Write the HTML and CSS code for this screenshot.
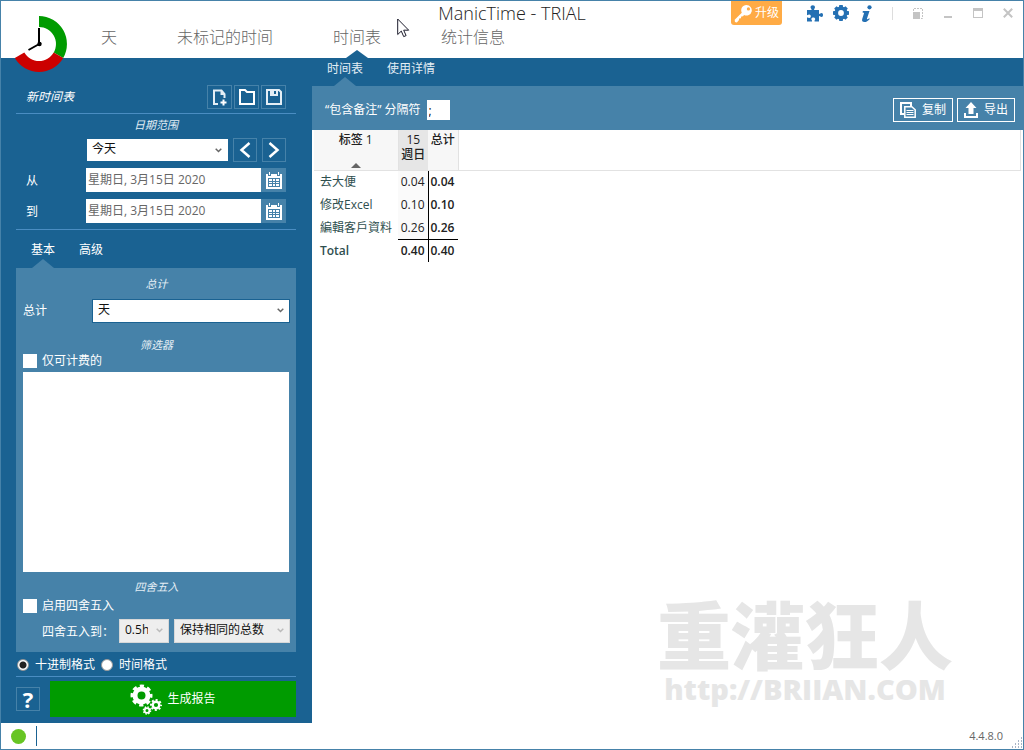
FILE: index.html
```html
<!DOCTYPE html>
<html lang="zh-CN">
<head>
<meta charset="utf-8">
<title>ManicTime - TRIAL</title>
<link rel="stylesheet" href="styles.css">
</head>
<body>
<div class="window">
  <header class="header">
    <div class="titlebar">
      <h1 class="app-title">ManicTime - TRIAL</h1>
      <div class="title-tools">
        <button class="upgrade" type="button">
          <svg width="19" height="19" viewBox="0 0 20 20" aria-hidden="true"><path fill="#fff" fill-rule="evenodd" d="M13 1a5.600 5.600 0 1 1-2.400 10.600L9.500 12.800l-1.900.3-.3 1.900-1.900.3-.3 1.800L3 19.500 1 19l-.3-2.500L8.200 9.200A5.600 5.600 0 0 1 13 1Zm2.200 2.500a1.700 1.700 0 1 0 0 3.400 1.700 1.700 0 0 0 0-3.400Z"/></svg>
          <span>升级</span>
        </button>
        <button class="tool" type="button" aria-label="插件"><svg width="17" height="17" viewBox="0 0 17 17"><path fill="#2470b3" d="M1 5h4.500C6 4 4.500 3.500 4.500 2.200 4.500 1 5.500.2 6.800.2S9 1 9 2.200C9 3.500 7.700 4 8.200 5H13v3.800c1 .4 1.300-.8 2.500-.8 1 0 1.500.9 1.500 2s-.5 2-1.500 2c-1.200 0-1.500-1.200-2.500-.8V16.500H8.600c-.5-1 .6-1.400.6-2.500 0-.9-.8-1.500-1.900-1.500s-2 .6-2 1.500c0 1.100 1.200 1.500.7 2.500H1v-4c1-.4 1.400.5 2.400.5.9 0 1.400-.8 1.400-1.700s-.6-1.700-1.400-1.700c-1 0-1.400.9-2.400.5Z"/></svg></button>
        <button class="tool" type="button" aria-label="设置"><svg width="16" height="16" viewBox="0 0 16 16"><g fill="#2470b3"><path fill-rule="evenodd" d="M8 1.500a6.500 6.500 0 1 1 0 13 6.500 6.500 0 0 1 0-13Zm0 3.600a2.900 2.900 0 1 0 0 5.800 2.900 2.900 0 0 0 0-5.800Z"/><path d="M6.300 0h3.400l.6 3H5.700ZM6.300 16h3.400l.6-3H5.700ZM0 6.300v3.400l3 .6V5.700ZM16 6.300v3.400l-3 .6V5.700ZM1.200 3.500l2.300-2.300L6 3 3 6ZM14.800 3.500l-2.300-2.300L10 3l3 3ZM1.200 12.500l2.300 2.300L6 13l-3-3ZM14.800 12.500l-2.300 2.300L10 13l3-3Z"/></g></svg></button>
        <button class="tool" type="button" aria-label="关于"><svg width="12" height="17" viewBox="0 0 12 17"><circle cx="8.500" cy="2.300" r="2.100" fill="#2470b3"/><path fill="#2470b3" d="M2 6h6.500L6 13.500c-.3 1 .3 1.200 2.200-.3l.6.700C7 16 5.400 17 3.500 17 1.300 17 .7 15.700 1.200 14l1.900-6-1.700-.7Z"/></svg></button>
        <span class="divider"></span>
        <button class="win first" type="button" aria-label="迷你模式"><svg width="10" height="11" viewBox="0 0 10 11"><path fill="none" stroke="#c4c4c4" stroke-dasharray="2 1" d="M.5 3V.5h9v10H7"/><path fill="#c4c4c4" d="M0 4h7v7H0Z"/></svg></button>
        <button class="win" type="button" aria-label="最小化"><svg width="10" height="11" viewBox="0 0 10 11"><path fill="#c4c4c4" d="M1 8h8v2H1Z"/></svg></button>
        <button class="win" type="button" aria-label="最大化"><svg width="10" height="11" viewBox="0 0 10 11"><path fill="#c4c4c4" fill-rule="evenodd" d="M0 0h10v10H0ZM1 3v6h8V3Z"/></svg></button>
        <button class="win" type="button" aria-label="关闭"><svg width="10" height="11" viewBox="0 0 10 11"><path fill="none" stroke="#c4c4c4" stroke-width="2" d="M.8.800l8.400 8.400M9.200.800L.8 9.200"/></svg></button>
      </div>
    </div>
    <nav class="nav">
      <a class="nav-link" href="#">天</a>
      <a class="nav-link" href="#">未标记的时间</a>
      <a class="nav-link current" href="#">时间表</a>
      <a class="nav-link" href="#">统计信息</a>
    </nav>
    <svg class="logo" width="54" height="56" viewBox="0 0 54 56" aria-hidden="true">
      <circle cx="25" cy="28" r="22" fill="#fff"/>
      <path fill="#009b00" d="M25 0a28 28 0 0 1 24.200 42L39.700 36.500A17 17 0 0 0 25 11Z"/>
      <path fill="#c00" d="M49.200 42A28 28 0 0 1 .8 42L10.300 36.500a17 17 0 0 0 29.400 0Z"/>
      <path fill="none" stroke="#000" stroke-width="2" d="M25 12v18M14.500 34L27 27"/>
      <circle cx="25.500" cy="28" r="2.200"/>
    </svg>
    <svg class="pointer" width="13" height="20" viewBox="0 0 13 20" aria-hidden="true"><path fill="#fff" stroke="#1c1c2c" d="M.7 1v15.500l3.600-3.400 2.400 5.500 2.400-1-2.400-5.400h5Z"/></svg>
  </header>

  <div class="body">
    <aside class="sidebar">
      <div class="sheet-row">
        <em class="sheet-name">新时间表</em>
        <button class="square wide" type="button" aria-label="新建"><svg width="16" height="17" viewBox="0 0 16 17"><path fill="none" stroke="#e4eef5" stroke-width="2" d="M6 15H2V1.500h7.500l3 3.500v4"/><path fill="#e4eef5" d="M8.500 1v5H13Z"/><path fill="none" stroke="#fff" stroke-width="2" d="M11.500 10.500v6M8.500 13.500h6"/></svg></button>
        <button class="square wide" type="button" aria-label="打开"><svg width="16" height="16" viewBox="0 0 16 16"><path fill="none" stroke="#fff" stroke-width="2" d="M1 1h5l2 2h7v12H1Z"/></svg></button>
        <button class="square wide" type="button" aria-label="保存"><svg width="16" height="16" viewBox="0 0 16 16"><path fill="none" stroke="#e4eef5" stroke-width="2" d="M1 1h12l2 2v12H1Z"/><path fill="#e4eef5" fill-rule="evenodd" d="M4 1h8v6H4ZM8 2v3h2V2Z"/></svg></button>
      </div>

      <h2 class="section-title">日期范围</h2>
      <div class="range-row">
        <span class="select range-select">
          <select aria-label="日期范围"><option>今天</option></select>
          <svg class="chevron" width="7" height="5" viewBox="0 0 7 5"><path d="M.7.7l2.800 2.800L6.300.7"/></svg>
        </span>
        <button class="square" type="button" aria-label="上一个"><svg width="12" height="16" viewBox="0 0 12 16"><path fill="none" stroke="#fff" stroke-width="2.500" d="M10.500 1L2.500 8l8 7"/></svg></button>
        <button class="square" type="button" aria-label="下一个"><svg width="12" height="16" viewBox="0 0 12 16"><path fill="none" stroke="#fff" stroke-width="2.500" d="M1.500 1l8 7-8 7"/></svg></button>
      </div>
      <div class="date-row">
        <label for="from">从</label>
        <input id="from" type="text" value="星期日, 3月15日 2020">
        <button class="calendar" type="button" aria-label="选择开始日期"><svg width="16" height="17" viewBox="0 0 16 17"><path fill="#fff" fill-rule="evenodd" d="M0 2h2v2h3V2h6v2h3V2h2v15H0ZM2 6v9h12V6Z"/><path fill="#fff" d="M3 0h1v3H3ZM12 0h1v3h-1ZM3 7h3v2H3ZM7 7h2v2H7ZM10 7h3v2h-3ZM3 10h3v1H3ZM7 10h2v1H7ZM10 10h3v1h-3ZM3 12h3v2H3ZM7 12h2v2H7ZM10 12h3v2h-3Z"/></svg></button>
      </div>
      <div class="date-row">
        <label for="to">到</label>
        <input id="to" type="text" value="星期日, 3月15日 2020">
        <button class="calendar" type="button" aria-label="选择结束日期"><svg width="16" height="17" viewBox="0 0 16 17"><path fill="#fff" fill-rule="evenodd" d="M0 2h2v2h3V2h6v2h3V2h2v15H0ZM2 6v9h12V6Z"/><path fill="#fff" d="M3 0h1v3H3ZM12 0h1v3h-1ZM3 7h3v2H3ZM7 7h2v2H7ZM10 7h3v2h-3ZM3 10h3v1H3ZM7 10h2v1H7ZM10 10h3v1h-3ZM3 12h3v2H3ZM7 12h2v2H7ZM10 12h3v2h-3Z"/></svg></button>
      </div>

      <nav class="side-tabs">
        <a class="side-tab current" href="#">基本</a>
        <a class="side-tab" href="#">高级</a>
      </nav>
      <div class="panel">
        <h2 class="section-title">总计</h2>
        <div class="total-row">
          <label for="total">总计</label>
          <span class="select total-select">
            <select id="total"><option>天</option></select>
            <svg class="chevron" width="7" height="5" viewBox="0 0 7 5"><path d="M.7.7l2.800 2.800L6.300.7"/></svg>
          </span>
        </div>
        <h2 class="section-title filter-title">筛选器</h2>
        <label class="check"><input type="checkbox">仅可计费的</label>
        <div class="filter-list"></div>
        <h2 class="section-title round-title">四舍五入</h2>
        <label class="check"><input type="checkbox">启用四舍五入</label>
        <div class="round-row">
          <label for="round">四舍五入到：</label>
          <span class="select off round-select">
            <select id="round" disabled><option>0.5h</option></select>
            <svg class="chevron" width="7" height="5" viewBox="0 0 7 5"><path d="M.7.7l2.800 2.800L6.300.7"/></svg>
          </span>
          <span class="select off keep-select">
            <select aria-label="舍入方式" disabled><option>保持相同的总数</option></select>
            <svg class="chevron" width="7" height="5" viewBox="0 0 7 5"><path d="M.7.7l2.800 2.800L6.300.7"/></svg>
          </span>
        </div>
      </div>

      <div class="format-row">
        <label class="radio"><input type="radio" name="format" checked>十进制格式</label>
        <label class="radio"><input type="radio" name="format">时间格式</label>
      </div>
      <div class="action-row">
        <button class="square help" type="button">?</button>
        <button class="generate" type="button">
          <svg width="32" height="31" viewBox="0 0 32 31" aria-hidden="true">
            <g fill="none" stroke="#fff">
              <circle cx="11.500" cy="11.500" r="6.500" stroke-width="5"/>
              <circle cx="11.500" cy="11.500" r="9.500" stroke-width="3" stroke-dasharray="4.200 3.260" stroke-dashoffset="2"/>
              <circle cx="26" cy="21" r="3.300" stroke-width="2.400"/>
              <circle cx="26" cy="21" r="5" stroke-width="2" stroke-dasharray="2 1.930" stroke-dashoffset="1"/>
              <circle cx="17" cy="26.500" r="2.400" stroke-width="1.800"/>
              <circle cx="17" cy="26.500" r="3.600" stroke-width="1.400" stroke-dasharray="1.500 1.330"/>
            </g>
          </svg>
          <span>生成报告</span>
        </button>
      </div>
    </aside>

    <main class="main">
      <nav class="subnav">
        <a class="subnav-link current" href="#">时间表</a>
        <a class="subnav-link" href="#">使用详情</a>
      </nav>
      <div class="toolbar">
        <label for="separator">“包含备注” 分隔符</label>
        <input class="separator" id="separator" type="text" value=";">
        <button class="outlined copy" type="button"><svg width="16" height="16" viewBox="0 0 16 16" aria-hidden="true"><path fill="none" stroke="#fff" stroke-width="2" d="M4 12H1V1h10v3"/><path fill="none" stroke="#fff" stroke-width="1.500" d="M4.800 4.800h7l3.400 3v7.400H4.800Z"/><path stroke="#fff" d="M6.500 8.500h7M6.500 10.500h7M6.500 12.500h7"/></svg>复制</button>
        <button class="outlined" type="button"><svg width="14" height="16" viewBox="0 0 14 16" aria-hidden="true"><path fill="#fff" d="M7 0l5.500 6H9.500v6h-5V6H1.500ZM0 11h2v3h10v-3h2v5H0Z"/></svg>导出</button>
      </div>
      <div class="report">
        <table class="sheet">
          <thead>
            <tr>
              <th class="tag" scope="col"><span>标签 1</span><svg width="10" height="5" viewBox="0 0 10 5" aria-hidden="true"><path fill="#666" d="M0 5l5-5 5 5Z"/></svg></th>
              <th class="day" scope="col">15<br>週日</th>
              <th class="sum" scope="col">总计</th>
              <th class="rest"></th>
            </tr>
          </thead>
          <tbody>
            <tr><td class="name">去大便</td><td class="value">0.04</td><td class="total">0.04</td><td></td></tr>
            <tr><td class="name">修改Excel</td><td class="value">0.10</td><td class="total">0.10</td><td></td></tr>
            <tr><td class="name">編輯客戶資料</td><td class="value">0.26</td><td class="total">0.26</td><td></td></tr>
            <tr class="totals"><td class="name">Total</td><td class="value">0.40</td><td class="total">0.40</td><td></td></tr>
          </tbody>
        </table>
        <div class="watermark">
          <div class="mark-name" lang="zh-TW">重灌狂人</div>
          <div class="mark-url">http://BRIIAN.COM</div>
        </div>
      </div>
    </main>
  </div>

  <footer class="status">
    <span class="dot"></span>
    <span class="version">4.4.8.0</span>
    <svg class="grip" width="12" height="12" viewBox="0 0 12 12" aria-hidden="true"><path fill="#a9b4c6" d="M10 0h1v2h-1ZM7 3h1v2H7ZM10 3h1v2h-1ZM4 6h1v2H4ZM7 6h1v2H7ZM10 6h1v2h-1ZM1 9h1v2H1ZM4 9h1v2H4ZM7 9h1v2H7ZM10 9h1v2h-1Z"/></svg>
  </footer>
</div>
</body>
</html>
```
FILE: styles.css
```css
:root {
  --dark: #1a6292;
  --mid: #4682a9;
  --line: #4a8dc2;
}

* { box-sizing: border-box; }

body {
  margin: 0;
  background: #fff;
  color: #fff;
  font: 12px/16px "Open Sans", "Noto Sans CJK SC", sans-serif;
}

button, input, select {
  margin: 0;
  padding: 0;
  border: 0;
  border-radius: 0;
  color: inherit;
  font: inherit;
}

button {
  display: flex;
  align-items: center;
  justify-content: center;
  background: none;
}

a { color: inherit; text-decoration: none; }
svg { display: block; flex: none; }

.window {
  display: flex;
  flex-direction: column;
  min-height: 100vh;
  border: 1px solid var(--mid);
}

/* Header */
.header { position: relative; }

.titlebar {
  display: grid;
  grid-template-columns: 1fr auto 1fr;
  align-items: start;
  height: 24px;
}

.app-title {
  grid-column: 2;
  margin: 0;
  color: #222;
  font-size: 18px;
  font-weight: 300;
  line-height: 24px;
}

.title-tools {
  display: flex;
  align-items: center;
  justify-content: flex-end;
  height: 24px;
  padding-right: 10px;
}

.upgrade {
  gap: 2px;
  height: 24px;
  margin-right: 24px;
  padding: 0 3px;
  border-radius: 0 0 3px 3px;
  background: #ffab45;
}

.tool { width: 17px; margin-right: 9px; }

.divider {
  width: 1px;
  height: 13px;
  margin: 0 20px 0 8px;
  background: #ddd;
}

.win { width: 10px; margin-left: 20px; }
.win.first { margin-left: 0; }

.nav {
  display: flex;
  gap: 60px;
  height: 33px;
  padding-left: 100px;
  color: #666;
  font-size: 16px;
  font-weight: 300;
  line-height: 24px;
}

.nav-link { position: relative; }

.current::after {
  content: "";
  position: absolute;
  bottom: 0;
  left: 50%;
  border: solid transparent;
  border-width: 0 11px 9px;
  border-bottom-color: var(--mid);
  transform: translateX(-50%);
}

.nav-link.current::after { border-bottom-color: var(--dark); border-bottom-width: 8px; }

.logo { position: absolute; top: 15px; left: 13px; z-index: 1; }
.pointer { position: absolute; top: 17px; left: 396px; }

/* Sidebar */
.body { display: flex; flex: 1; }

.sidebar {
  display: flex;
  flex-direction: column;
  flex: none;
  width: 311px;
  padding: 27px 16px 6px 15px;
  background: var(--dark);
}

.sheet-row {
  display: flex;
  gap: 2px;
  padding: 0 10px 4px;
  border-bottom: 1px solid var(--line);
}

.sheet-name { flex: 1; line-height: 24px; }

.square {
  width: 24px;
  height: 24px;
  border: 1px solid var(--mid);
}

.square.wide { width: 25px; }

.section-title {
  margin: 0;
  color: #e4eef5;
  font-size: 11px;
  font-style: italic;
  font-weight: 400;
  line-height: 22px;
  text-align: center;
}

.range-row {
  display: flex;
  align-items: center;
  gap: 5px;
  padding: 2px 10px 6px 71px;
}

.select { position: relative; display: block; }

.select select {
  display: block;
  width: 100%;
  height: 22px;
  padding: 0 20px 2px 5px;
  appearance: none;
  background: #fff;
  color: #111;
  opacity: 1;
}

.chevron {
  position: absolute;
  top: 9px;
  right: 6px;
  fill: none;
  stroke: #666;
  stroke-width: 1.5;
  pointer-events: none;
}

.range-select { flex: 1; }

.date-row {
  display: flex;
  height: 24px;
  margin-bottom: 7px;
  padding: 0 10px;
}

.date-row label { width: 60px; line-height: 26px; }

.date-row input {
  flex: 1;
  min-width: 0;
  padding: 0 2px;
  background: #fff;
  color: #666;
}

.calendar { width: 25px; background: var(--mid); }

.side-tabs {
  display: flex;
  gap: 24px;
  height: 39px;
  margin-top: -1px;
  padding: 8px 15px 0;
  border-top: 1px solid var(--line);
  line-height: 24px;
}

.side-tab { position: relative; }

.panel {
  display: flex;
  flex: 1;
  flex-direction: column;
  padding: 5px 6px 9px 7px;
  background: var(--mid);
}

.total-row {
  display: flex;
  align-items: center;
  justify-content: space-between;
  margin-top: 4px;
}

.total-select { width: 198px; }
.total-select select { height: 24px; border: 1px solid var(--dark); }

.filter-title { margin-top: 14px; line-height: 16px; }

.check {
  display: flex;
  align-items: center;
  gap: 5px;
  line-height: 16px;
}

.check input {
  width: 14px;
  height: 14px;
  appearance: none;
  background: #fff;
}

.filter-list { flex: 1; min-height: 200px; margin-right: 1px; background: #fff; }
.filter-title + .check { margin-bottom: 3px; }
.round-title { margin-top: 4px; }

.round-row {
  display: flex;
  align-items: center;
  gap: 5px;
  margin-top: 5px;
  padding-left: 19px;
}

.round-row label { width: 72px; font-family: "Noto Sans CJK TC", sans-serif; white-space: nowrap; }
.select.off select { height: 24px; border: 1px solid #d8d8d8; background: #eee; }
.select.off .chevron { stroke: #bbb; }
.round-select { width: 50px; }
.keep-select { flex: 1; }

.format-row {
  display: flex;
  gap: 5px;
  padding: 5px 0 3px;
  border-bottom: 1px solid var(--line);
}

.radio { display: flex; align-items: center; gap: 6px; }

.radio input {
  width: 12px;
  height: 12px;
  margin-left: 1px;
  appearance: none;
  border: 1px solid #999;
  border-radius: 50%;
  background: #fff;
}

.radio input:checked { background: radial-gradient(circle, #222 3px, #fff 4px); }

.action-row {
  display: flex;
  align-items: center;
  gap: 10px;
  padding-top: 4px;
}

.help { font-size: 22px; font-weight: 700; }

.generate {
  flex: 1;
  gap: 5px;
  height: 36px;
  background: #009b00;
}

/* Report */
.main {
  display: flex;
  flex: 1;
  flex-direction: column;
  min-width: 0;
}

.subnav {
  display: flex;
  gap: 24px;
  height: 28px;
  padding-left: 15px;
  background: var(--dark);
  color: #e4eef5;
  line-height: 22px;
}

.subnav-link { position: relative; }

.toolbar {
  display: flex;
  align-items: center;
  gap: 4px;
  height: 44px;
  padding: 4px 8px 0 13px;
  background: var(--mid);
}

.separator {
  width: 23px;
  height: 20px;
  margin-left: 2px;
  padding: 0 2px;
  background: #fff;
  color: #111;
}

.outlined {
  gap: 6px;
  height: 24px;
  padding: 0 6px;
  border: 1px solid #fff;
}

.copy { margin-left: auto; }

.report { position: relative; flex: 1; padding: 0 2px; }

.sheet {
  width: 100%;
  border-collapse: collapse;
  table-layout: fixed;
  color: #222;
}

.sheet th {
  height: 40px;
  padding: 2px 0 0;
  border-bottom: 1px solid #e2e2e2;
  background: #f7f7f7;
  font-weight: 500;
  line-height: 15px;
  vertical-align: top;
}

.sheet .tag { width: 84px; border-right: 1px solid #e2e2e2; }
.sheet .tag svg { margin: 16px auto 0; }
.sheet .day { width: 30px; background: #e6e6e6; }
.sheet .sum { width: 30px; border-right: 1px solid #e2e2e2; }
.sheet .rest { background: #fff; border-right: 1px solid #e2e2e2; }

.sheet td { height: 23px; padding: 1px 0 0; line-height: 16px; }
.sheet .name { padding-left: 6px; color: #2f4f4f; white-space: nowrap; }
.sheet .value { padding-right: 3px; background: #fafafa; text-align: right; }
.sheet .total { padding-left: 2px; border-left: 1px solid #000; font-weight: 600; }
.sheet .totals .name { font-weight: 600; }
.sheet .totals .value { border-top: 1px solid #000; background: #fff; font-weight: 600; }
.sheet .totals .total { border-top: 1px solid #000; }

.watermark {
  position: absolute;
  right: 70px;
  bottom: 16px;
  color: #e6e6e6;
  text-align: center;
}

.mark-name { font: 900 74px/78px "Noto Sans CJK TC", sans-serif; }
.mark-url { font: 800 29px/36px "Open Sans", sans-serif; }

/* Status bar */
.status {
  display: flex;
  align-items: center;
  height: 26px;
  padding-left: 10px;
  color: #666;
  font-size: 11px;
}

.dot { width: 15px; height: 15px; border-radius: 50%; background: #67c523; }

.version {
  display: flex;
  flex: 1;
  align-items: center;
  justify-content: flex-end;
  height: 20px;
  margin-left: 10px;
  padding-right: 8px;
  border-left: 1px solid var(--dark);
}

.grip { align-self: flex-end; }
```
